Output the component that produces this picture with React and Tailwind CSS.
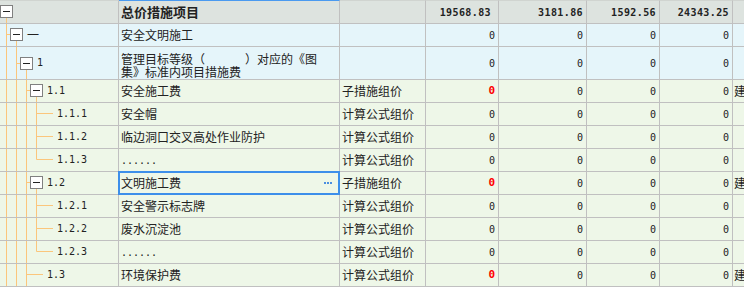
import React from "react";

const ORANGE = "#fbc67c";

function Box({ x, y }) {
  return (
    <g>
      <rect x={x + 0.5} y={y + 0.5} width="12" height="12" fill="#ffffff" stroke="#808080" strokeWidth="1" />
      <line x1={x + 3} y1={y + 6.5} x2={x + 10} y2={y + 6.5} stroke="#222" strokeWidth="1" />
    </g>
  );
}

function VL({ x, y1 = 0, y2 }) {
  return <line x1={x} y1={y1} x2={x} y2={y2} stroke={ORANGE} strokeWidth="1" />;
}
function HL({ x1, x2, y }) {
  return <line x1={x1} y1={y} x2={x2} y2={y} stroke={ORANGE} strokeWidth="1" />;
}

function Tree({ type, h }) {
  let w = 13;
  let content = null;
  if (type === "header") {
    w = 13;
    content = (
      <>
        <VL x={6.5} y1={16} y2={h} />
        <Box x={0} y={4} />
      </>
    );
  } else if (type === "l1") {
    w = 27;
    content = (
      <>
        <VL x={6.5} y2={h} />
        <HL x1={6.5} x2={10} y={10.5} />
        <VL x={16.5} y1={16} y2={h} />
        <Box x={10} y={4} />
      </>
    );
  } else if (type === "l2") {
    w = 37;
    content = (
      <>
        <VL x={6.5} y2={h} />
        <VL x={16.5} y2={h} />
        <HL x1={16.5} x2={20} y={16.5} />
        <VL x={26.5} y1={22} y2={h} />
        <Box x={20} y={10} />
      </>
    );
  } else if (type === "l3") {
    w = 47;
    content = (
      <>
        <VL x={6.5} y2={h} />
        <VL x={16.5} y2={h} />
        <VL x={26.5} y2={h} />
        <HL x1={26.5} x2={30} y={10.5} />
        <VL x={36.5} y1={16} y2={h} />
        <Box x={30} y={4} />
      </>
    );
  } else if (type === "leaf" || type === "leafLast") {
    w = 57;
    content = (
      <>
        <VL x={6.5} y2={h} />
        <VL x={16.5} y2={h} />
        <VL x={26.5} y2={h} />
        <VL x={36.5} y2={type === "leaf" ? h : 10.5} />
        <HL x1={36.5} x2={53} y={10.5} />
      </>
    );
  } else if (type === "l3leaf") {
    w = 47;
    content = (
      <>
        <VL x={6.5} y2={h} />
        <VL x={16.5} y2={h} />
        <VL x={26.5} y2={h} />
        <HL x1={26.5} x2={43} y={10.5} />
      </>
    );
  }
  return (
    <svg width={w} height={h} viewBox={`0 0 ${w} ${h}`} className="shrink-0 block">
      {content}
    </svg>
  );
}

const rows = [
  { type: "l1", label: "一", cjkLabel: true, name: "安全文明施工", kind: "", bg: "bg-[#e5f5fa]", h: 23 },
  { type: "l2", label: "1", name: "two", kind: "", bg: "bg-[#e5f5fa]", h: 33 },
  { type: "l3", label: "1.1", name: "安全施工费", kind: "子措施组价", red: true, jian: true, bg: "bg-[#eef7e8]", h: 23 },
  { type: "leaf", label: "1.1.1", name: "安全帽", kind: "计算公式组价", bg: "bg-[#eef7e8]", h: 23 },
  { type: "leaf", label: "1.1.2", name: "临边洞口交叉高处作业防护", kind: "计算公式组价", bg: "bg-[#eef7e8]", h: 23 },
  { type: "leafLast", label: "1.1.3", name: "......", dots: true, kind: "计算公式组价", bg: "bg-[#eef7e8]", h: 23 },
  { type: "l3", label: "1.2", name: "文明施工费", kind: "子措施组价", red: true, jian: true, selected: true, bg: "bg-[#eef7e8]", h: 23 },
  { type: "leaf", label: "1.2.1", name: "安全警示标志牌", kind: "计算公式组价", bg: "bg-[#eef7e8]", h: 23 },
  { type: "leaf", label: "1.2.2", name: "废水沉淀池", kind: "计算公式组价", bg: "bg-[#eef7e8]", h: 23 },
  { type: "leafLast", label: "1.2.3", name: "......", dots: true, kind: "计算公式组价", bg: "bg-[#eef7e8]", h: 23 },
  { type: "l3leaf", label: "1.3", name: "环境保护费", kind: "计算公式组价", red: true, jian: true, bg: "bg-[#eef7e8]", h: 23 },
];

const CJK = "font-['Noto_Sans_CJK_SC','Noto_Sans',sans-serif]";
const MONO = "font-['DejaVu_Sans_Mono','Liberation_Mono',monospace]";

function NumCell({ w, children, red, extra = "" }) {
  return (
    <div className={`${w} shrink-0 h-full border-r border-[#c0c0c0] flex items-center justify-end pr-[3px] ${MONO} text-[10px] ${red ? "text-[#ff0000] font-bold text-[11px]" : "text-[#222]"} ${extra}`}>
      {children}
    </div>
  );
}

function Row({ r }) {
  const contentH = r.h - 1;
  return (
    <div className={`flex ${r.bg} border-b border-[#c0c0c0]`} style={{ height: r.h }}>
      <div className="w-[119px] shrink-0 h-full border-r border-[#c0c0c0] flex items-start overflow-hidden">
        <Tree type={r.type} h={contentH} />
        <span
          className={`text-[#222] whitespace-nowrap ${r.cjkLabel ? `${CJK} text-[12px]` : `${MONO} text-[10px]`}`}
          style={{ lineHeight: `${contentH}px` }}
        >
          {r.label}
        </span>
      </div>
      <div className={`relative w-[221px] shrink-0 h-full border-r border-[#c0c0c0] flex items-center pl-[2px] ${CJK} text-[12px] text-[#222]`}>
        {r.name === "two" ? (
          <div className="self-start pt-[5px] leading-[13px] whitespace-nowrap">
            <div>
              管理目标等级（<span className="inline-block w-[40px]"></span>）对应的《图
            </div>
            <div>集》标准内项目措施费</div>
          </div>
        ) : r.dots ? (
          <span className={`${MONO} text-[10px]`}>{r.name}</span>
        ) : (
          <span className="whitespace-nowrap">{r.name}</span>
        )}
        {r.selected && (
          <>
            <span className="ml-auto mr-[7px] flex gap-[1px]">
              <span className="w-[2px] h-[2px] bg-[#4a8fe0]"></span>
              <span className="w-[2px] h-[2px] bg-[#4a8fe0]"></span>
              <span className="w-[2px] h-[2px] bg-[#4a8fe0]"></span>
            </span>
            <span className="absolute -top-px -left-px -right-px -bottom-px border-2 border-[#3d8fea] z-10 pointer-events-none"></span>
          </>
        )}
      </div>
      <div className={`w-[86px] shrink-0 h-full border-r border-[#c0c0c0] flex items-center pl-[2px] ${CJK} text-[12px] text-[#222] whitespace-nowrap`}>
        {r.kind}
      </div>
      <NumCell w="w-[73px]" red={r.red}>0</NumCell>
      <NumCell w="w-[88px]">0</NumCell>
      <NumCell w="w-[73px]">0</NumCell>
      <NumCell w="w-[73px]">0</NumCell>
      <div className={`w-[60px] shrink-0 h-full flex items-center pl-[1px] ${CJK} text-[12px] text-[#222] whitespace-nowrap`}>
        {r.jian ? "建" : ""}
      </div>
    </div>
  );
}

function HeadNum({ w, children, pr = "pr-[3px]" }) {
  return (
    <div className={`${w} shrink-0 h-full border-r border-t border-t-[#d0d4d0] border-r-[#c0c0c0] flex items-center justify-end ${pr} ${MONO} text-[10px] font-bold tracking-[0.4px] text-[#222]`}>
      {children}
    </div>
  );
}

export default function App() {
  return (
    <div className="w-[744px] h-[287px] overflow-hidden bg-white">
      <div className="w-[800px]">
        <div className="flex h-[24px] bg-[#dde3df] border-b border-[#c0c0c0]">
          <div className="w-[119px] shrink-0 h-full border-r border-t border-t-[#d0d4d0] border-r-[#c0c0c0] flex items-start">
            <Tree type="header" h={22} />
          </div>
          <div className={`w-[221px] shrink-0 h-full border-r border-t border-t-[#4a9af0] border-r-[#c0c0c0] flex items-center pl-[2px] ${CJK} text-[13px] font-bold text-[#222]`}>
            总价措施项目
          </div>
          <div className="w-[86px] shrink-0 h-full border-r border-t border-t-[#d0d4d0] border-r-[#c0c0c0]"></div>
          <HeadNum w="w-[73px]" pr="pr-[7px]">19568.83</HeadNum>
          <HeadNum w="w-[88px]">3181.86</HeadNum>
          <HeadNum w="w-[73px]">1592.56</HeadNum>
          <HeadNum w="w-[73px]">24343.25</HeadNum>
          <div className="w-[60px] shrink-0 h-full border-t border-t-[#d0d4d0]"></div>
        </div>
        {rows.map((r, i) => (
          <Row key={i} r={r} />
        ))}
      </div>
    </div>
  );
}
